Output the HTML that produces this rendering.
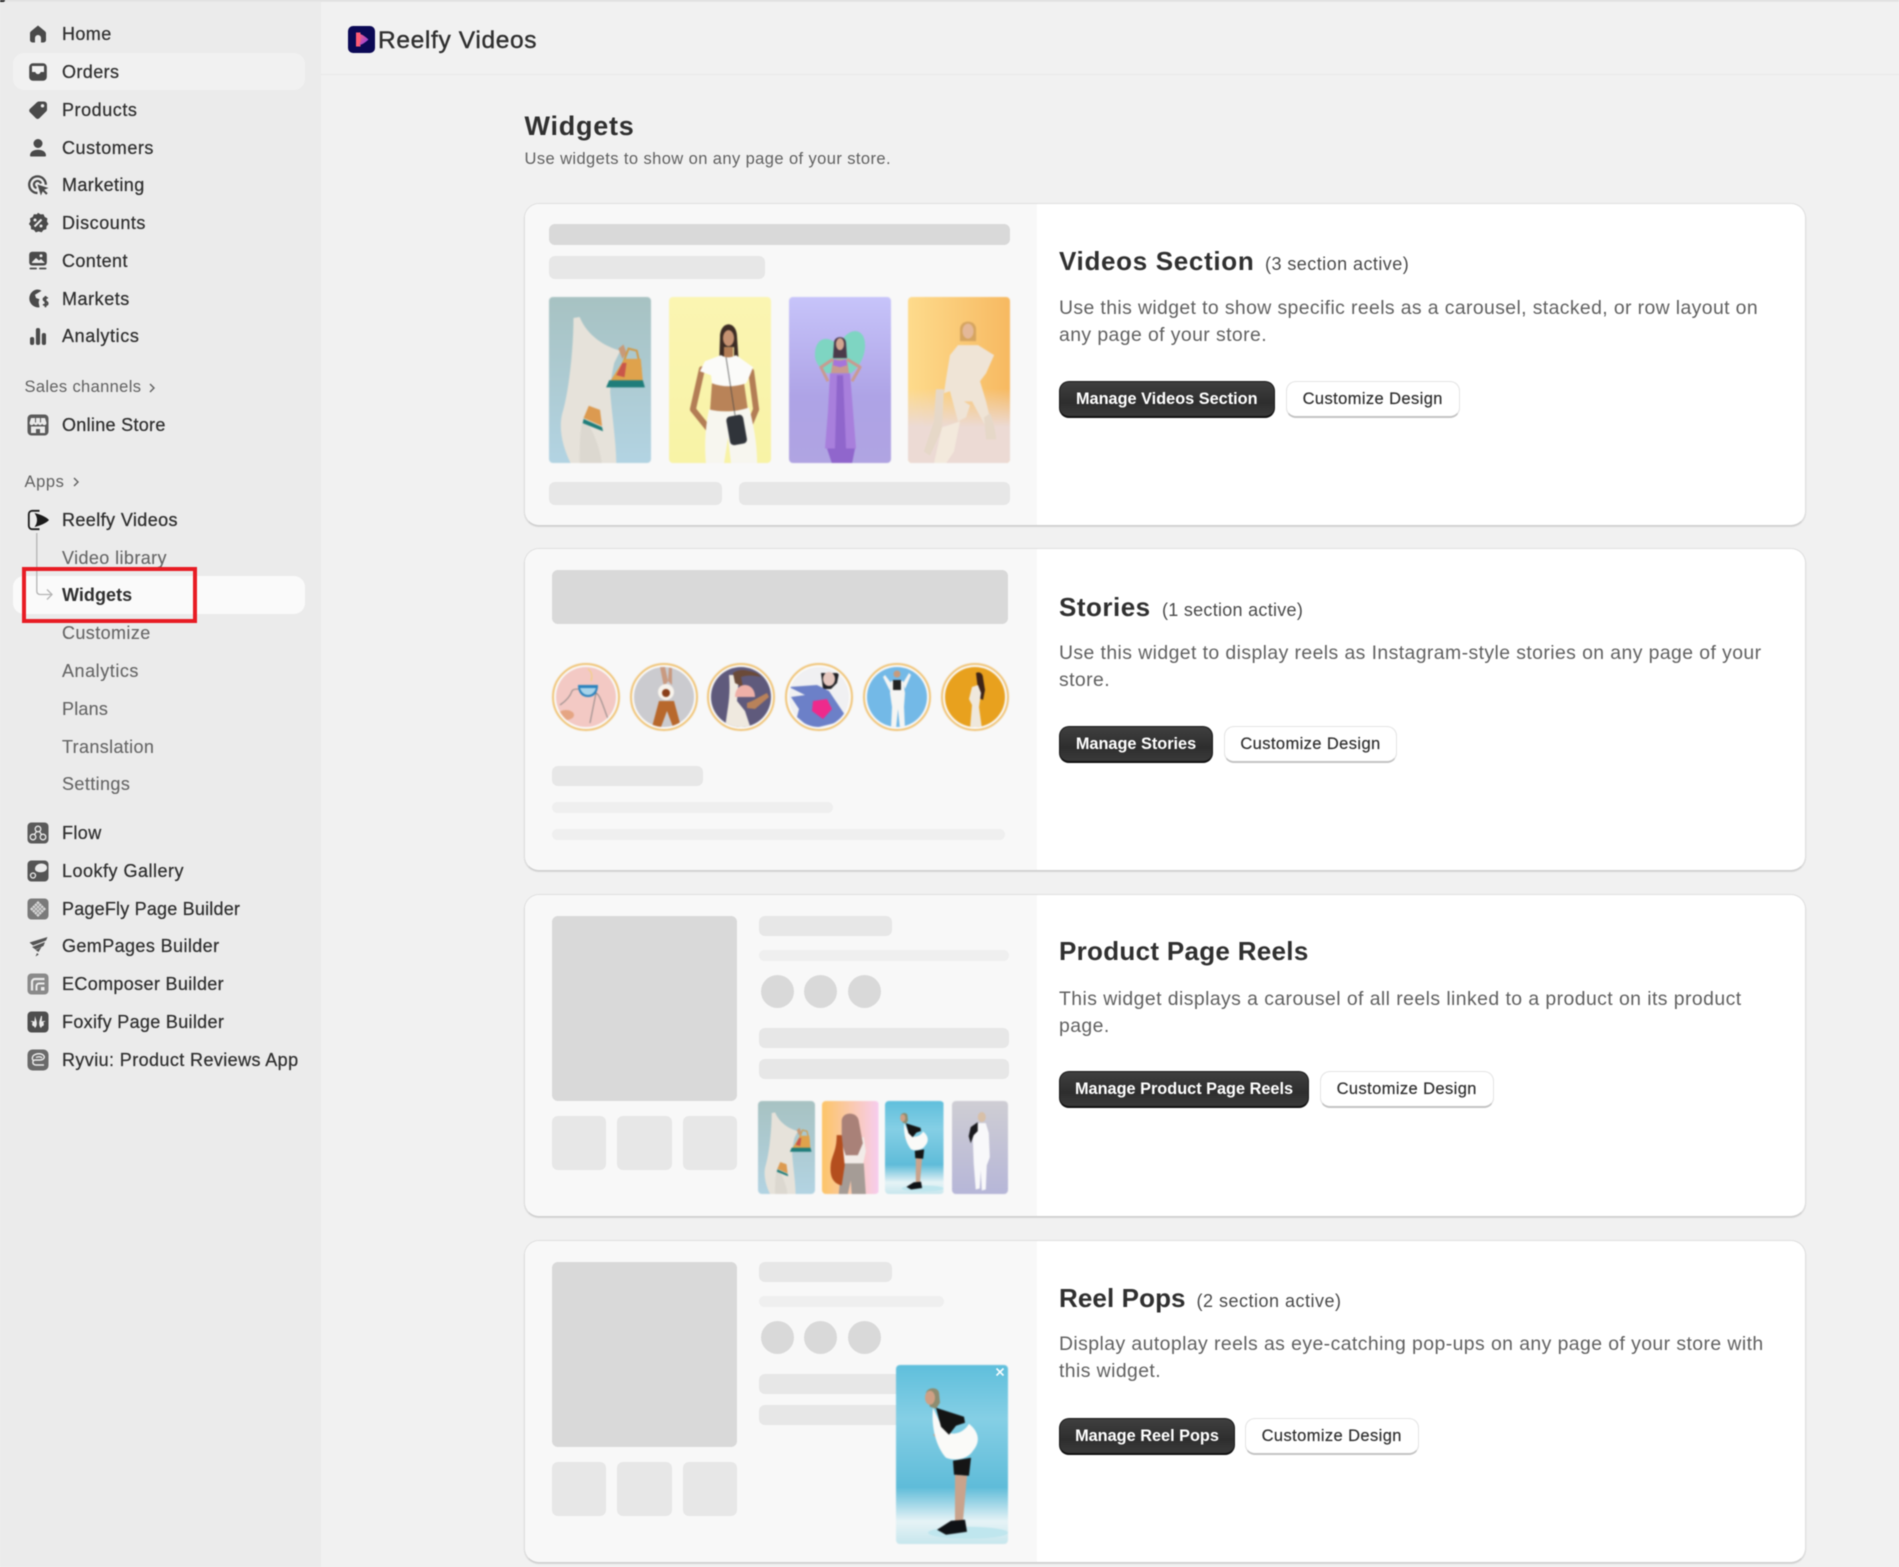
<!DOCTYPE html>
<html lang="en"><head><meta charset="utf-8"><title>Reelfy Videos - Widgets</title>
<style>
html,body{margin:0;padding:0;width:1899px;height:1567px;overflow:hidden;background:#f1f1f1}
#page{position:relative;width:1899px;height:1567px;overflow:hidden;background:#f1f1f1;font-family:"Liberation Sans",sans-serif;filter:blur(.4px)}
#side{position:absolute;left:0;top:0;width:321px;height:1567px;background:#ebebeb}
#topl{position:absolute;left:0;top:0;width:1899px;height:2px;background:linear-gradient(#d8d8d8,#ececec)}
#hdr{position:absolute;left:321px;top:74px;width:1578px;height:1px;background:#e8e8e8}
.t{position:absolute;white-space:nowrap;height:20px;line-height:20px}
.n{left:62px;font-size:18px;letter-spacing:.4px;color:#303030;-webkit-text-stroke:.25px #303030}
.s{left:62px;font-size:18px;letter-spacing:.4px;color:#666;-webkit-text-stroke:.12px #666}
.g{left:24.5px;font-size:16.5px;letter-spacing:.35px;color:#616161}
.ic{position:absolute;left:26px;width:24px;height:24px}
.hl{position:absolute;left:13px;width:292px;border-radius:11px}
.card{position:absolute;left:524px;width:1282px;height:323.5px;background:#fff;border:1px solid #dfdfdf;border-bottom:1px solid #cfcfcf;border-radius:15px;box-shadow:0 1px 1px rgba(0,0,0,.12);box-sizing:border-box;overflow:hidden}
.card i{position:absolute;left:0;top:0;width:512px;height:100%;background:#f8f8f8;display:block}
.b{position:absolute;background:#e7e7e7;border-radius:6px;margin-left:-.25px}
.d{background:#d9d9d9}
.l{background:#efefef;border-radius:5.5px}
.c{position:absolute;background:#d9d9d9;border-radius:50%;width:33px;height:33px;margin-left:-.25px}
.ph{position:absolute;border-radius:4px;overflow:hidden;filter:blur(.6px);margin-left:-.25px}
.ph svg,.ci svg{display:block;width:100%;height:100%}
.ci{position:absolute;width:68px;height:68px;top:663px;filter:blur(.55px);margin-left:-.25px}
.h2{left:1059px;font-size:26px;font-weight:700;letter-spacing:.5px;color:#303030;height:30px;line-height:30px}
.sub{font-size:18px;letter-spacing:.35px;color:#4a4a4a}
.p{left:1059px;font-size:19.4px;letter-spacing:.42px;color:#616161}
.bk{position:absolute;height:37px;border-radius:10px;box-sizing:border-box;background:linear-gradient(#3f3f3f,#2e2e2e 60%,#3a3a3a);border:1px solid #1a1a1a;border-bottom:2px solid #111;color:#fff;font-size:16.3px;font-weight:700;line-height:35.5px;text-align:center;white-space:nowrap}
.wh{position:absolute;height:37px;border-radius:10px;box-sizing:border-box;background:#fff;border:1px solid #e3e3e3;border-bottom:2px solid #c4c4c4;color:#303030;font-size:16.5px;letter-spacing:.4px;-webkit-text-stroke:.2px #303030;line-height:35.5px;text-align:center;white-space:nowrap}
</style></head><body><div id="page">

<svg width="0" height="0" style="position:absolute"><defs>
<linearGradient id="ga" x1="0" y1="0" x2="0" y2="1"><stop offset="0" stop-color="#a7c2c2"/><stop offset="1" stop-color="#b3d4e3"/></linearGradient>
<linearGradient id="gb" x1="0" y1="0" x2="0" y2="1"><stop offset="0" stop-color="#fbf5b2"/><stop offset="1" stop-color="#f8f3a6"/></linearGradient>
<linearGradient id="gc" x1="0" y1="0" x2="0" y2="1"><stop offset="0" stop-color="#c7c4fa"/><stop offset=".6" stop-color="#aea3e6"/><stop offset="1" stop-color="#b0a4e2"/></linearGradient>
<linearGradient id="gd" x1="0" y1="0" x2="1" y2="0"><stop offset="0" stop-color="#fedb8c"/><stop offset="1" stop-color="#f7b961"/></linearGradient>
<linearGradient id="gd2" x1="0" y1="0" x2="0" y2="1"><stop offset=".55" stop-color="#ecdcd6" stop-opacity="0"/><stop offset=".78" stop-color="#ecdad4"/></linearGradient>
<linearGradient id="ge" x1="0" y1="0" x2="0" y2="1"><stop offset="0" stop-color="#5fbfdc"/><stop offset=".3" stop-color="#85cfe5"/><stop offset=".68" stop-color="#5fbcd9"/><stop offset=".87" stop-color="#e6f3f6"/><stop offset="1" stop-color="#c6e6ed"/></linearGradient>
<linearGradient id="gf" x1="0" y1="0" x2="1" y2="0"><stop offset="0" stop-color="#fdc567"/><stop offset="1" stop-color="#f7cdef"/></linearGradient>
<linearGradient id="gg" x1="0" y1="0" x2="0" y2="1"><stop offset="0" stop-color="#cfced4"/><stop offset="1" stop-color="#b6b6d8"/></linearGradient>
<linearGradient id="lg" x1="0" y1="0" x2="1" y2="1"><stop offset="0" stop-color="#ff5f7e"/><stop offset="1" stop-color="#7b3cf0"/></linearGradient>
<clipPath id="cc"><circle cx="34" cy="34" r="30"/></clipPath>

<symbol id="pa" viewBox="0 0 100 166" preserveAspectRatio="xMidYMid slice">
<rect width="100" height="166" fill="url(#ga)"/>
<path fill="#e6e2da" d="M24 22 30 21C38 40 55 50 70 54L64 66C62 75 60 85 60 95 62 120 66 145 66 166H22C14 150 8 130 14 112 20 90 24 50 24 22Z"/>
<path fill="#dcd8d0" d="M34 118c8 12 16 30 18 48H30c0-18 0-34 4-48z"/>
<path fill="#c89a78" d="M68 52l5-4 3 8-4 6z"/>
<path fill="none" stroke="#cf9a4a" stroke-width="2" d="M72 68l6-16 8 2 4 18"/>
<path fill="#dfa24c" d="M60 84l14-22 16 0 2 22z"/>
<path fill="#c9564a" d="M66 78l6-12 4 0-2 14z"/>
<path fill="#1f7d7a" d="M56 90l3-7h33l2 7z"/>
<path fill="#dc9a50" d="M34 120l5-12 11 4 2 16z"/>
<path fill="#1f7d7a" d="M34 121l18 8 1 4-20-8z"/>
</symbol>

<symbol id="pb" viewBox="0 0 102 166" preserveAspectRatio="xMidYMid slice">
<rect width="102" height="166" fill="url(#gb)"/>
<path fill="#3d2c24" d="M51 40c0-17 17-17 17 0l2 30h-5V50H55v22h-5z"/>
<ellipse cx="59.500" cy="41" rx="5.500" ry="8" fill="#c69272"/>
<g fill="none" stroke="#b37d55" stroke-width="6" stroke-linecap="round" stroke-linejoin="round"><path d="M33 72 24 112 40 132"/><path d="M82 74 87 112 77 136"/></g>
<rect x="55" y="50" width="9" height="12" fill="#b37d55"/>
<path fill="#b98358" d="M43 86h32l4 28H41z"/>
<path fill="#fbfbf9" d="M52 58c5 3 9 3 15 0l17 12-4 10-3 6c-11 4-24 4-34 0l-1-8-11-4 5-10z"/>
<path fill="#f7f6ef" d="M40 112c12 3 26 3 40-2 4 16 8 34 8 56H62l-3-26-4 26H37c-2-20 0-40 3-54z"/>
<rect x="59" y="118" width="17" height="29" rx="4" fill="#30343a" transform="rotate(-10 68 132)"/>
<path d="M57 60l9 58" stroke="#444" stroke-width=".7"/>
</symbol>

<symbol id="pc" viewBox="0 0 102 166" preserveAspectRatio="xMidYMid slice">
<rect width="102" height="166" fill="url(#gc)"/>
<path fill="#7ed5c2" d="M50 50c-8-12-24-12-24 8 0 8 6 14 12 18h24c8-6 14-16 14-28 0-20-20-18-26 2z"/>
<path fill="#4a3a4a" d="M45 46c0-8 12-8 12 0l1 15h-14z"/>
<ellipse cx="51" cy="47" rx="4" ry="6" fill="#d2a590"/>
<g fill="none" stroke="#c99a90" stroke-width="3" stroke-linejoin="round"><path d="M44 62 32 70 39 84"/><path d="M58 62 71 70 63 84"/></g>
<path fill="#c99a90" d="M44 62h14l2 14H42z"/>
<path fill="#a574dc" d="M45 62c3 2 8 2 12 0l1 6-7 2-7-2z"/>
<path fill="#a87fdc" d="M41 76h20l3 38 3 37H36l3-37z"/>
<path fill="#9066cc" d="M48 78h6l3 73H46zM38 151h28l-3 15H43z"/>
</symbol>

<symbol id="pd" viewBox="0 0 102 166" preserveAspectRatio="xMidYMid slice">
<rect width="102" height="166" fill="url(#gd)"/><rect width="102" height="166" fill="url(#gd2)"/>
<path fill="#d6a560" d="M52 32c0-10 16-10 16 0v12H52z"/>
<ellipse cx="60" cy="34" rx="5.500" ry="7.500" fill="#e4b898"/>
<path fill="#efe4d6" d="M50 48l20 0 16 10-8 18-6 8 6 20 6 26-6 0-14-26-8 0 6 4-4 12-8 4-8-30-6 2 2-14 4-24z"/>
<path fill="#e6d8c8" d="M28 92l8 0-2 40-12 26-6-4 10-30zM82 116c4 10 6 22 6 26l-10 0-2-22z"/>
<path fill="#f3e9dc" d="M34 130l18-6-6 30-8 12H26z"/>
</symbol>

<symbol id="pe" viewBox="0 0 112 180" preserveAspectRatio="xMidYMid slice">
<rect width="112" height="180" fill="url(#ge)"/>
<ellipse cx="72" cy="168" rx="40" ry="6" fill="#bfe6ee"/>
<path fill="#8d8c70" d="M30 28c2-6 12-6 13 0l1 10-4 6-6-2z"/>
<ellipse cx="34" cy="33" rx="5" ry="7" fill="#cfa084"/>
<path fill="#c4a088" d="M44 66l2 7-3 3-6-6z"/>
<path fill="#fafaf8" d="M37 43C35 62 40 82 50 93 60 97 72 94 77 86 84 78 84 68 73 59 68 68 56 72 50 66L43 56Z"/>
<path fill="#141414" d="M40 43 68 52 69 58 60 61 53 70 45 62Z"/>
<path fill="#151515" d="M57 96 75 93 73 111 58 110Z"/>
<path fill="#c9a38c" d="M59 110 71 111 67 156 59 156Z"/>
<path fill="#0f1216" d="M55 156 69 155 71 167 50 170 41 165Z"/>
</symbol>

<symbol id="pf" viewBox="0 0 57 93" preserveAspectRatio="xMidYMid slice">
<rect width="57" height="93" fill="url(#gf)"/>
<path fill="#f2ece8" d="M18 36h24l2 14-3 14H18z"/>
<path fill="#a59c96" d="M20 62h22l2 31H30l-1-14-3 14h-9z"/>
<path fill="#a98178" d="M20 20c0-10 16-10 17 0l4 22-5 12H24l-4-12z"/>
<path fill="#b44e1e" d="M15 34h5l3 30-3 20c-8-2-12-8-11-20 1-10 6-14 6-30z"/>
</symbol>

<symbol id="pg" viewBox="0 0 57 93" preserveAspectRatio="xMidYMid slice">
<rect width="57" height="93" fill="url(#gg)"/>
<ellipse cx="30" cy="16" rx="4" ry="5" fill="#d8c0a8"/>
<path fill="#f8f8fa" d="M26 22h8l3 10 1 24-3 8-1 24-4 1-1-20-1 18-4 1-2-26-1-28z"/>
<path fill="#1a1a1e" d="M26 21l-7 5-2 9 2 7 3-8 4-4z"/>
</symbol>
</defs></svg>

<div id="side"></div><div id="topl"></div><div id="hdr"></div>
<div style="position:absolute;left:0;top:0;width:5px;height:2px;background:#222;border-radius:0 0 4px 0"></div>
<div class="hl" style="top:53px;height:37px;background:#f1f1f1"></div>
<div class="hl" style="top:576px;height:37.500px;background:#fafafa"></div>

<!-- sidebar icons -->
<svg class="ic" style="top:21.500px" viewBox="0 0 24 24" fill="#4a4a4a"><path d="M12 3.500 19 9.300c.7.600 1 1.300 1 2.200V18a2.500 2.500 0 0 1-2.500 2.500H15v-4.500a3 3 0 0 0-6 0v4.500H6.500A2.500 2.500 0 0 1 4 18v-6.500c0-.9.3-1.600 1-2.200Z"/></svg>
<svg class="ic" style="top:59.500px" viewBox="0 0 24 24"><rect x="3.200" y="3.200" width="17.600" height="17.600" rx="3.800" fill="#4a4a4a"/><path fill="#f1f1f1" d="M6 6h12v6h-3.300c-.4 1.300-1.400 2.100-2.700 2.100S9.700 13.300 9.300 12H6Z"/></svg>
<svg class="ic" style="top:97.500px" viewBox="0 0 24 24"><path fill="#4a4a4a" d="M13 3.500h5a3 3 0 0 1 3 3v5c0 .8-.3 1.500-.9 2L13.300 20.300a2.400 2.400 0 0 1-3.400 0l-6-6a2.400 2.400 0 0 1 0-3.400L11 4.300c.5-.5 1.300-.8 2-.8Z"/><circle cx="16.500" cy="7.800" r="1.700" fill="#ebebeb"/></svg>
<svg class="ic" style="top:135.500px" viewBox="0 0 24 24" fill="#4a4a4a"><circle cx="12" cy="7.500" r="4.500"/><path d="M4 19.500c0-3.700 3.400-5.800 8-5.800s8 2.100 8 5.800c0 .6-.4 1-1 1H5c-.6 0-1-.4-1-1Z"/></svg>
<svg class="ic" style="top:172.500px" viewBox="0 0 24 24"><path fill="none" stroke="#4a4a4a" stroke-width="2.300" d="M11.500 20a8.300 8.300 0 1 1 8.300-8.300"/><path fill="none" stroke="#4a4a4a" stroke-width="2.200" d="M10.500 15a3.600 3.600 0 1 1 4.500-4.500"/><path fill="#4a4a4a" d="M11.500 11.500l11 3.500-4.300 1.800 3.500 3.500-1.500 1.500-3.500-3.500-1.800 4.300Z"/></svg>
<svg class="ic" style="top:210.500px" viewBox="0 0 24 24"><path fill="#4a4a4a" d="M12 1.700l2.500 1.700 3-.2 1.200 2.800 2.700 1.400-.5 3 1.600 2.600-2 2.300-.2 3-2.900.7-1.800 2.400-2.900-1-2.900 1-1.800-2.400-2.900-.7-.2-3-2-2.300 1.600-2.600-.5-3 2.700-1.400 1.200-2.800 3 .2Z"/><path stroke="#ebebeb" stroke-width="2" d="M8.500 15.500l7-7"/><circle cx="9" cy="9" r="1.500" fill="#ebebeb"/><circle cx="15" cy="15" r="1.500" fill="#ebebeb"/></svg>
<svg class="ic" style="top:248.500px" viewBox="0 0 24 24"><rect x="3.200" y="2.800" width="17.600" height="13.700" rx="3" fill="#4a4a4a"/><path fill="#ebebeb" d="M6 13l4-4 3 2.500 2-1.500 3.500 3.500v.5H6Z"/><circle cx="15" cy="6.800" r="1.500" fill="#ebebeb"/><rect x="3.500" y="18.600" width="7.500" height="1.800" rx=".9" fill="#4a4a4a"/><rect x="13" y="18.600" width="7.500" height="1.800" rx=".9" fill="#4a4a4a"/></svg>
<svg class="ic" style="top:286.500px" viewBox="0 0 24 24"><path fill="#4a4a4a" d="M11 2.500a8.800 8.800 0 0 1 4.500 1.200L9 7.800l1 3.200 3.500 1.200c-.7 1.300-1 2.800-.7 4.300l.8 3.800A8.800 8.800 0 1 1 11 2.500Z"/><path fill="none" stroke="#4a4a4a" stroke-width="1.800" d="M21.500 11.500c-.5-1.200-3.800-1.300-4 .7-.2 2.300 4.300 1.800 4.200 4.300-.1 2-3.500 2-4.500.7M19.500 9v11.300"/></svg>
<svg class="ic" style="top:324px" viewBox="0 0 24 24" fill="#4a4a4a"><rect x="4" y="13" width="4.200" height="8" rx="2"/><rect x="9.900" y="4" width="4.200" height="17" rx="2"/><rect x="15.800" y="9" width="4.200" height="12" rx="2"/></svg>
<svg class="ic" style="top:412.500px" viewBox="0 0 24 24"><rect x="1.500" y="1.500" width="21" height="21" rx="4" fill="#5b5b5b"/><path fill="#ebebeb" d="M5 5h14l1.500 5c0 1.300-1 2.200-2.200 2.200-.9 0-1.900-.6-2.100-1.400-.3.800-1.200 1.400-2.100 1.400s-1.800-.6-2.100-1.400c-.3.800-1.200 1.400-2.100 1.400s-1.800-.6-2.100-1.400c-.2.800-1.200 1.400-2.100 1.400-1.200 0-2.200-.9-2.200-2.200Z"/><path fill="#ebebeb" d="M5 13.500h14V20h-5v-4h-4v4H5Z"/><path stroke="#5b5b5b" stroke-width="1" d="M9.500 5v4.500M14.500 5v4.500"/></svg>
<svg class="ic" style="top:508px;left:26px" viewBox="0 0 24 24"><path fill="none" stroke="#1c1c1c" stroke-width="1.800" d="M13.500 2.800H6.200a3.400 3.400 0 0 0-3.400 3.400v11.600a3.400 3.400 0 0 0 3.400 3.400h7.300"/><path fill="#1c1c1c" d="M8.500 5c5 1 12 4 14.500 7-2.500 3-9.500 6-14.500 7 1.500-2 2.500-4.500 2.500-7s-1-5-2.500-7Z"/></svg>
<svg style="position:absolute;left:30px;top:530px;width:28px;height:72px" viewBox="0 0 28 72" fill="none" stroke="#b4b4b4" stroke-width="1.300"><path d="M6.800 3v58c0 2 1 3.500 3.500 3.500H22M17 59.500l5 5-5 5"/></svg>
<svg class="ic" style="top:820.500px" viewBox="0 0 24 24"><rect x="1.500" y="1.500" width="21" height="21" rx="4" fill="#5a5a5a"/><g fill="none" stroke="#ebebeb" stroke-width="1.300"><circle cx="12" cy="8" r="2.800"/><circle cx="7" cy="16" r="2.800"/><circle cx="17" cy="16" r="2.800"/><path d="M10.500 10.400 8.500 13.600M13.500 10.400l2 3.200"/></g></svg>
<svg class="ic" style="top:858.500px" viewBox="0 0 24 24"><rect x="1.500" y="1.500" width="21" height="21" rx="4" fill="#555"/><path fill="#ebebeb" d="M9 10c0-3.500 3-5.500 6.500-5.500 3.200 0 5.500 1.800 5.500 4.300 0 2.700-2.800 4.500-6 4.500-3.500 0-6-1.200-6-3.300Z"/><circle cx="7" cy="16.500" r="2.500" fill="none" stroke="#ebebeb" stroke-width="1.300"/></svg>
<svg class="ic" style="top:897px" viewBox="0 0 24 24"><rect x="1.500" y="1.500" width="21" height="21" rx="4" fill="#7a7a7a"/><path fill="#d8d8d8" d="M12 4l8 8-8 8-8-8Z"/><path stroke="#8a8a8a" stroke-width=".7" d="M8 8l8 8M10 6l8 8M6 10l8 8M16 8l-8 8M14 6l-8 8M18 10l-8 8"/></svg>
<svg class="ic" style="top:934px" viewBox="0 0 24 24" fill="#555"><path d="M21.500 3 3.500 8.500l3.500 3 13-5Z"/><path d="M19 8 6 13l3.500 2.500 8-3.500ZM15.500 13l-6 3 3 2ZM11 19l-1.500 3.500 3.300-2Z"/></svg>
<svg class="ic" style="top:972px" viewBox="0 0 24 24"><rect x="1.500" y="1.500" width="21" height="21" rx="4" fill="#8a8a8a"/><path fill="none" stroke="#ebebeb" stroke-width="2.200" d="M18.500 7H9a3 3 0 0 0-3 3v8.500"/><path fill="none" stroke="#ebebeb" stroke-width="2" d="M18.500 11.500H13a2.500 2.500 0 0 0-2.500 2.500v4.500"/><rect x="15" y="15" width="3.500" height="3.500" fill="#ebebeb"/></svg>
<svg class="ic" style="top:1009.500px" viewBox="0 0 24 24"><rect x="1.500" y="1.500" width="21" height="21" rx="4" fill="#4e4e4e"/><path fill="#ebebeb" d="M9 6c.5 2.500 1.800 4.500 1.800 7.500 0 2-.6 3.500-1.800 4.500-.5-1.300-1.200-2-2.500-2.300-.5-1.200-.5-2.500.2-3.500l-2.200-1c1.200-.3 2.500-.2 3.800.3C8.700 10 8.700 8 9 6ZM15 6c-.5 2.500-1.800 4.500-1.800 7.500 0 2 .6 3.500 1.800 4.500.5-1.300 1.200-2 2.500-2.300.5-1.200.5-2.500-.2-3.500l2.200-1c-1.200-.3-2.500-.2-3.800.3.3-1.500.3-3.500.3-5.500Z"/></svg>
<svg class="ic" style="top:1047.500px" viewBox="0 0 24 24"><rect x="1.500" y="1.500" width="21" height="21" rx="5" fill="#6a6a6a"/><path fill="none" stroke="#ebebeb" stroke-width="1.400" d="M7 8c3-3 9-3 11 0 1 2-1 4-4 4H9c-3 0-3 5 1 5h8M8 13c-2-1-2-3-1-5M10 9.500c2-1 5-1 6 .5"/></svg>

<!-- sidebar text -->
<div class="t n" style="top:23.500px">Home</div>
<div class="t n" style="top:61.500px">Orders</div>
<div class="t n" style="top:99.500px;letter-spacing:.55px">Products</div>
<div class="t n" style="top:137.500px;letter-spacing:.55px">Customers</div>
<div class="t n" style="top:174.500px">Marketing</div>
<div class="t n" style="top:212.500px;letter-spacing:.55px">Discounts</div>
<div class="t n" style="top:250.500px">Content</div>
<div class="t n" style="top:288.500px;letter-spacing:.55px">Markets</div>
<div class="t n" style="top:326px;letter-spacing:.6px">Analytics</div>
<div class="t g" style="top:377px">Sales channels</div>
<svg style="position:absolute;left:147px;top:382px;width:10px;height:12px" viewBox="0 0 10 12" fill="none" stroke="#616161" stroke-width="1.400"><path d="M3 2l4 4-4 4"/></svg>
<div class="t n" style="top:414.500px;letter-spacing:.3px">Online Store</div>
<div class="t g" style="top:472px;letter-spacing:.6px">Apps</div>
<svg style="position:absolute;left:71px;top:476px;width:10px;height:12px" viewBox="0 0 10 12" fill="none" stroke="#616161" stroke-width="1.400"><path d="M3 2l4 4-4 4"/></svg>
<div class="t n" style="top:509.500px;-webkit-text-stroke:.3px #303030">Reelfy Videos</div>
<div class="t s" style="top:547.500px">Video library</div>
<div class="t n" style="top:584.500px;font-weight:700;letter-spacing:.05px;-webkit-text-stroke:0">Widgets</div>
<div class="t s" style="top:622.500px">Customize</div>
<div class="t s" style="top:661px;letter-spacing:.55px">Analytics</div>
<div class="t s" style="top:698.500px;letter-spacing:.2px">Plans</div>
<div class="t s" style="top:736.500px;letter-spacing:.35px">Translation</div>
<div class="t s" style="top:774px">Settings</div>
<div class="t n" style="top:822.500px">Flow</div>
<div class="t n" style="top:860.500px;letter-spacing:.5px">Lookfy Gallery</div>
<div class="t n" style="top:899px;letter-spacing:.2px">PageFly Page Builder</div>
<div class="t n" style="top:936px">GemPages Builder</div>
<div class="t n" style="top:974px;letter-spacing:.35px">EComposer Builder</div>
<div class="t n" style="top:1011.500px;letter-spacing:.32px">Foxify Page Builder</div>
<div class="t n" style="top:1049.500px">Ryviu: Product Reviews App</div>
<div style="position:absolute;left:22px;top:567px;width:175px;height:55.500px;box-sizing:border-box;border:4px solid #e81c24"></div>

<!-- header -->
<svg style="position:absolute;left:348px;top:26px;width:27px;height:27px" viewBox="0 0 27 27"><rect width="27" height="27" rx="5" fill="#0b0955"/><path fill="#ff5c74" d="M8 6.500h4.500v14H8z"/><path fill="url(#lg)" d="M11 7.500c3.500 1 7.500 4 9.500 6-2 2-6 5-9.500 6 1-2 1.500-4 1.500-6s-.5-4-1.500-6Z"/></svg>
<div class="t" style="left:378px;top:30.500px;font-size:24.500px;letter-spacing:.65px;color:#303030;-webkit-text-stroke:.4px #303030">Reelfy Videos</div>
<div class="t" style="left:524.500px;top:111px;height:30px;line-height:30px;font-size:27px;font-weight:700;letter-spacing:.75px;color:#303030">Widgets</div>
<div class="t" style="left:524.500px;top:148.500px;font-size:16.500px;letter-spacing:.41px;color:#616161">Use widgets to show on any page of your store.</div>

<!-- CARD 1 -->
<div class="card" style="top:202.500px"><i></i></div>
<div class="b d" style="left:549.500px;top:224px;width:461px;height:21px"></div>
<div class="b" style="left:549.500px;top:255.500px;width:216px;height:23px"></div>
<div class="ph" style="left:549.500px;top:296.500px;width:102px;height:166.500px"><svg><use href="#pa"/></svg></div>
<div class="ph" style="left:669.500px;top:296.500px;width:102px;height:166.500px"><svg><use href="#pb"/></svg></div>
<div class="ph" style="left:789px;top:296.500px;width:102px;height:166.500px"><svg><use href="#pc"/></svg></div>
<div class="ph" style="left:908.500px;top:296.500px;width:102px;height:166.500px"><svg><use href="#pd"/></svg></div>
<div class="b" style="left:549.500px;top:481.500px;width:172.500px;height:23px"></div>
<div class="b" style="left:739px;top:481.500px;width:271px;height:23px"></div>
<div class="t h2" style="top:245.500px;letter-spacing:.68px">Videos Section</div>
<div class="t sub" style="left:1265px;top:253.500px;letter-spacing:.45px">(3 section active)</div>
<div class="t p" style="top:297.500px;letter-spacing:.39px">Use this widget to show specific reels as a carousel, stacked, or row layout on</div>
<div class="t p" style="top:325px">any page of your store.</div>
<div class="bk" style="left:1059px;top:380.500px;width:215.500px">Manage Videos Section</div>
<div class="wh" style="left:1286px;top:380.500px;width:173.500px">Customize Design</div>

<!-- CARD 2 -->
<div class="card" style="top:547.500px"><i></i></div>
<div class="b d" style="left:552.500px;top:570px;width:456px;height:54px"></div>
<div class="ci" style="left:552px"><svg viewBox="0 0 68 68"><circle cx="34" cy="34" r="33" fill="#fafafa" stroke="#f0c477" stroke-width="2"/><g clip-path="url(#cc)"><rect width="68" height="68" fill="#f3c9c4"/><path d="M8 42c6-4 10-8 12-14 2-3 8-2 10 0M44 30c4 2 6 10 12 26M44 30l-6 30" fill="none" stroke="#777" stroke-width=".8"/><path d="M26 22h20c0 8-4 12-10 12s-10-4-10-12Z" fill="#2a82bd"/><path d="M28 25h16c-1 4-4 7-8 7s-7-3-8-7Z" fill="#a9d4ea"/><path d="M36 6c3 2 5 6 3 12" fill="none" stroke="#f3d080" stroke-width="1.200"/><ellipse cx="14" cy="52" rx="8" ry="5" fill="#e5a583"/></g></svg></div>
<div class="ci" style="left:630px"><svg viewBox="0 0 68 68"><circle cx="34" cy="34" r="33" fill="#fafafa" stroke="#f0c477" stroke-width="2"/><g clip-path="url(#cc)"><rect width="68" height="68" fill="#cbcbcf"/><path d="M30 4h5l3 14-4 6zM42 4h-3l-1 14 4 4z" fill="#c99a80"/><circle cx="36" cy="29" r="8" fill="#f7f3ec"/><circle cx="36" cy="30" r="4" fill="#8a3f1a"/><path d="M29 38h15l7 26h-8l-6-16-6 16h-9Z" fill="#b8682c"/></g></svg></div>
<div class="ci" style="left:707.500px"><svg viewBox="0 0 68 68"><circle cx="34" cy="34" r="33" fill="#fafafa" stroke="#f0c477" stroke-width="2"/><g clip-path="url(#cc)"><rect width="68" height="68" fill="#5f5a7c"/><path d="M22 12h10l-2 26 8 10 6 18H18c2-20 6-30 4-54Z" fill="#efe9df"/><path d="M26 10c4-3 10-4 16-2 6 1 10 3 12 6-8-2-14-2-20 0l2 10-8-4Z" fill="#6b4a38"/><path d="M28 34c0-8 5-12 10-12s10 4 10 12Z" fill="#eeb0a8"/><path d="M40 40c6-2 12-6 20-10l2 4-14 12-8-1Z" fill="#b9825a"/></g></svg></div>
<div class="ci" style="left:785.500px"><svg viewBox="0 0 68 68"><circle cx="34" cy="34" r="33" fill="#fafafa" stroke="#f0c477" stroke-width="2"/><g clip-path="url(#cc)"><rect width="68" height="68" fill="#f0f0f2"/><path d="M36 10h18l-2 10-6 6-8 0Z" fill="#202024"/><ellipse cx="44" cy="16" rx="6" ry="7" fill="#e6c8c0"/><path d="M4 24l28-2 12 6 8 12 8 12-10 8-24 6-14-12 2-8-8-12 14-2Z" fill="#6c80c8"/><path d="M28 38l14-2 5 10-9 10-11-8Z" fill="#ee2a8c"/></g></svg></div>
<div class="ci" style="left:863.500px"><svg viewBox="0 0 68 68"><circle cx="34" cy="34" r="33" fill="#fafafa" stroke="#f0c477" stroke-width="2"/><g clip-path="url(#cc)"><rect width="68" height="68" fill="#73b9e7"/><path d="M28 18h12l2 12-1 14 1 22h-5l-2-20-2 20h-5l1-22-2-14Z" fill="#f5f5f3"/><path d="M28 20 22 12l-2 2 7 14ZM40 20l6-10 2 2-6 14Z" fill="#f5f5f3"/><path d="M30 17h8v10h-8Z" fill="#222"/><circle cx="34" cy="11" r="3.500" fill="#c89b7c"/></g></svg></div>
<div class="ci" style="left:941.500px"><svg viewBox="0 0 68 68"><circle cx="34" cy="34" r="33" fill="#fafafa" stroke="#f0c477" stroke-width="2"/><g clip-path="url(#cc)"><rect width="68" height="68" fill="#e8a11e"/><path d="M35 10c4-2 7 1 7 5l2 12-2 10-4-2Z" fill="#3d2418"/><path d="M31 24l6-2 3 8-2 14 3 22H29l2-24-3-6Z" fill="#efe8dc"/></g></svg></div>
<div class="b" style="left:552.500px;top:765.500px;width:151px;height:20px"></div>
<div class="b l" style="left:552.500px;top:802px;width:281px;height:11px"></div>
<div class="b l" style="left:552.500px;top:829px;width:453px;height:11px"></div>
<div class="t h2" style="top:591.500px">Stories</div>
<div class="t sub" style="left:1162px;top:599.500px;letter-spacing:.28px">(1 section active)</div>
<div class="t p" style="top:642.500px">Use this widget to display reels as Instagram-style stories on any page of your</div>
<div class="t p" style="top:670px">store.</div>
<div class="bk" style="left:1059px;top:726px;width:154px">Manage Stories</div>
<div class="wh" style="left:1224px;top:726px;width:173px">Customize Design</div>

<!-- CARD 3 -->
<div class="card" style="top:893.500px"><i></i></div>
<div class="b d" style="left:552.500px;top:916px;width:185px;height:185px"></div>
<div class="b" style="left:552.500px;top:1115.500px;width:54px;height:54px"></div>
<div class="b" style="left:617px;top:1115.500px;width:55.500px;height:54px"></div>
<div class="b" style="left:683px;top:1115.500px;width:54.500px;height:54px"></div>
<div class="b" style="left:759px;top:916px;width:133.500px;height:20px"></div>
<div class="b l" style="left:759px;top:950px;width:250px;height:11px"></div>
<div class="c" style="left:761.500px;top:975px"></div>
<div class="c" style="left:804.500px;top:975px"></div>
<div class="c" style="left:848px;top:975px"></div>
<div class="b" style="left:759px;top:1028px;width:250px;height:20px"></div>
<div class="b" style="left:759px;top:1059px;width:250px;height:20px"></div>
<div class="ph" style="left:758.500px;top:1100.500px;width:57px;height:93.500px"><svg><use href="#pa"/></svg></div>
<div class="ph" style="left:822.500px;top:1100.500px;width:56.500px;height:93.500px"><svg><use href="#pf"/></svg></div>
<div class="ph" style="left:885.500px;top:1100.500px;width:58.500px;height:93.500px"><svg><use href="#pe"/></svg></div>
<div class="ph" style="left:952px;top:1100.500px;width:56.500px;height:93.500px"><svg><use href="#pg"/></svg></div>
<div class="t h2" style="top:936px;letter-spacing:.3px">Product Page Reels</div>
<div class="t p" style="top:988.500px;letter-spacing:.44px">This widget displays a carousel of all reels linked to a product on its product</div>
<div class="t p" style="top:1015.500px">page.</div>
<div class="bk" style="left:1059px;top:1071px;width:250px">Manage Product Page Reels</div>
<div class="wh" style="left:1320px;top:1071px;width:173.500px">Customize Design</div>

<!-- CARD 4 -->
<div class="card" style="top:1239.500px"><i></i></div>
<div class="b d" style="left:552.500px;top:1262px;width:185px;height:185px"></div>
<div class="b" style="left:552.500px;top:1462px;width:54px;height:54px"></div>
<div class="b" style="left:617px;top:1462px;width:55.500px;height:54px"></div>
<div class="b" style="left:683px;top:1462px;width:54.500px;height:54px"></div>
<div class="b" style="left:759px;top:1262px;width:133.500px;height:20px"></div>
<div class="b l" style="left:759px;top:1296px;width:185px;height:11px"></div>
<div class="c" style="left:761.500px;top:1321px"></div>
<div class="c" style="left:804.500px;top:1321px"></div>
<div class="c" style="left:848px;top:1321px"></div>
<div class="b" style="left:759px;top:1374px;width:145px;height:20px"></div>
<div class="b" style="left:759px;top:1405px;width:145px;height:20px"></div>
<div class="ph" style="left:896.500px;top:1364.500px;width:112px;height:179.500px"><svg><use href="#pe"/></svg></div>
<svg style="position:absolute;left:995px;top:1367px;width:10px;height:10px" viewBox="0 0 10 10" stroke="#f4fbfd" stroke-width="1.700"><path d="M1.500 1.500l7 7M8.500 1.500l-7 7"/></svg>
<div class="t h2" style="top:1283px;letter-spacing:.1px">Reel Pops</div>
<div class="t sub" style="left:1196.500px;top:1290.500px;letter-spacing:.5px">(2 section active)</div>
<div class="t p" style="top:1333.500px;letter-spacing:.43px">Display autoplay reels as eye-catching pop-ups on any page of your store with</div>
<div class="t p" style="top:1361px">this widget.</div>
<div class="bk" style="left:1059px;top:1417.500px;width:176px">Manage Reel Pops</div>
<div class="wh" style="left:1245px;top:1417.500px;width:173.500px">Customize Design</div>

</div></body></html>
